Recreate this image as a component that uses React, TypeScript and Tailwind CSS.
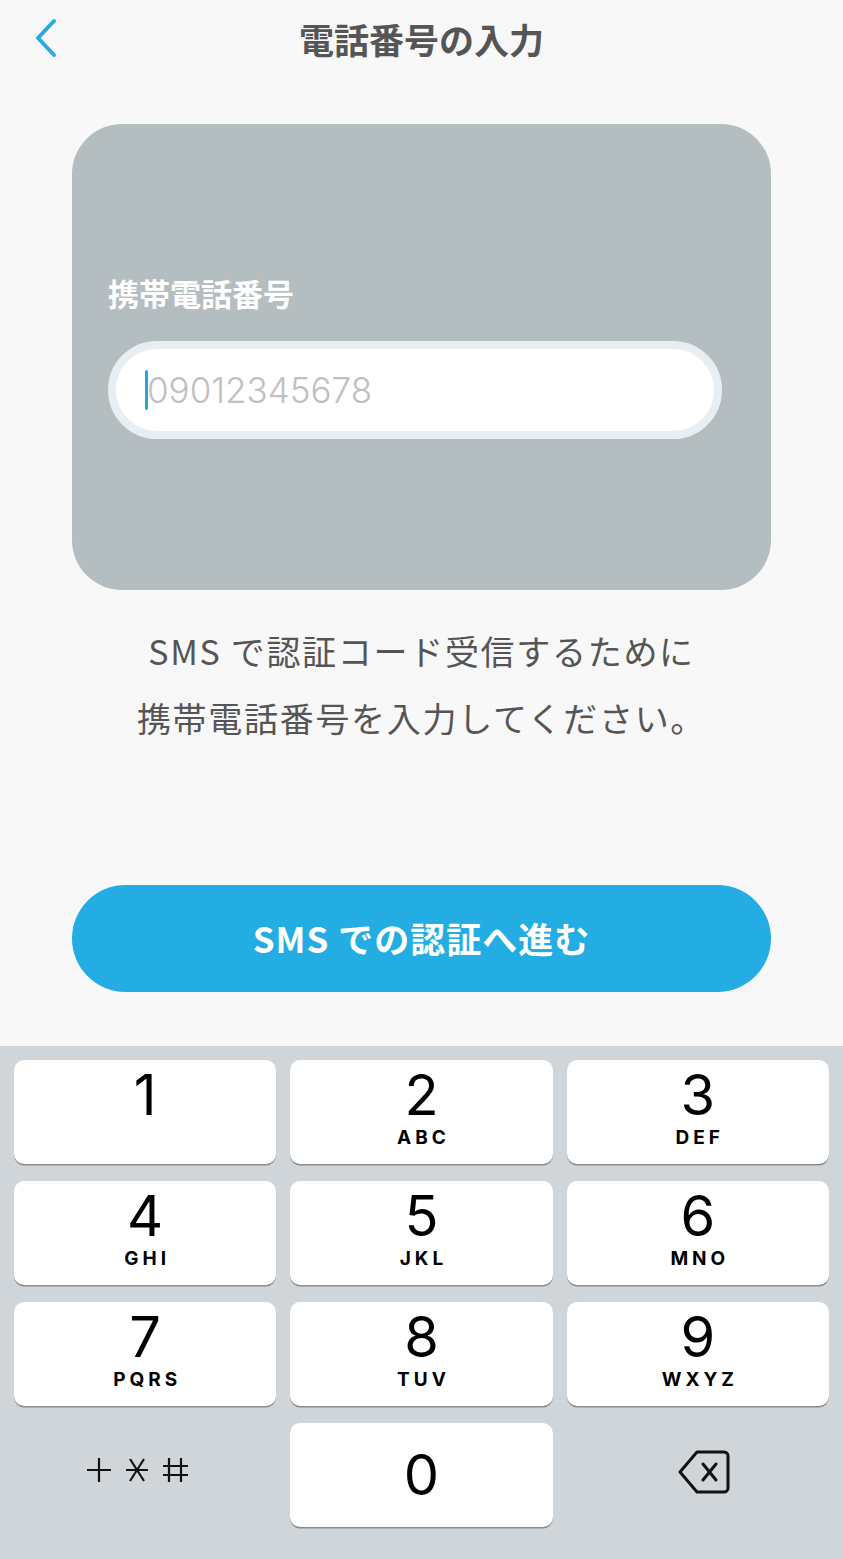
import React from 'react';

const keys = [
  { d: '1', l: '' },
  { d: '2', l: 'ABC' },
  { d: '3', l: 'DEF' },
  { d: '4', l: 'GHI' },
  { d: '5', l: 'JKL' },
  { d: '6', l: 'MNO' },
  { d: '7', l: 'PQRS' },
  { d: '8', l: 'TUV' },
  { d: '9', l: 'WXYZ' },
];

const jp = { fontFamily: '"Noto Sans CJK JP", "Noto Sans", sans-serif' };
const kb = { fontFamily: 'Inter, "Liberation Sans", sans-serif' };

const Key: React.FC<{ d: string; l: string; center?: boolean }> = ({ d, l, center }) => (
  <button
    className={`h-[104px] bg-white rounded-[10px] shadow-[0_1.5px_0_#8a8c90] flex flex-col items-center ${center ? 'justify-center' : 'pt-[5px]'}`}
    style={kb}
  >
    <span className="text-[56px] leading-[60px] font-normal text-black">{d}</span>
    {l && <span className="mt-[2px] text-[19px] leading-[22px] font-bold tracking-[4px] pl-[4px] text-black">{l}</span>}
  </button>
);

const App: React.FC = () => {
  return (
    <div className="w-[843px] h-[1559px] bg-[#f8f8f8] flex flex-col overflow-hidden" style={jp}>
      {/* header */}
      <div className="h-[78px] relative flex items-center justify-center">
        <button className="absolute left-[30px] top-[18px]">
          <svg width="30" height="40" viewBox="0 0 30 40" fill="none">
            <path d="M24 3 L8 20 L24 37" stroke="#29a9df" strokeWidth="4" strokeLinecap="round" strokeLinejoin="round" />
          </svg>
        </button>
        <h1 className="text-[35px] font-bold text-[#555555] leading-none -mt-[2px]">電話番号の入力</h1>
      </div>

      {/* card */}
      <div className="mx-[72px] mt-[46px] h-[466px] rounded-[50px] bg-[#b4bdbf] pl-[36px] pr-[49px] pt-[151px]">
        <div className="text-[31px] leading-[36px] font-bold text-white">携帯電話番号</div>
        <div className="mt-[30px] h-[98px] rounded-full bg-white border-[8px] border-[#e9eef2] flex items-center pl-[29px]">
          <span className="w-[3px] h-[40px] bg-[#26a6dd] rounded-full" />
          <span className="text-[35px] text-[#c0c0c0] -ml-[1px]" style={{ fontFamily: 'Inter, "Liberation Sans", sans-serif', fontWeight: 300 }}>09012345678</span>
        </div>
      </div>

      {/* description */}
      <div className="mt-[27px] text-center text-[34px] leading-[67px] text-[#555555] tracking-[1.7px]">
        <p>SMS で認証コード受信するために</p>
        <p>携帯電話番号を入力してください。</p>
      </div>

      {/* submit */}
      <button className="mx-[72px] mt-[134px] h-[107px] rounded-full bg-[#23ade2] text-white text-[35px] font-bold tracking-[1px]">
        SMS での認証へ進む
      </button>

      {/* keypad */}
      <div className="mt-[54px] flex-1 bg-[#d0d5da] px-[14px] pt-[14px]">
        <div className="grid grid-cols-3 gap-x-[14px] gap-y-[17px]">
          {keys.map(k => (
            <Key key={k.d} d={k.d} l={k.l} />
          ))}
          <div className="h-[104px] flex items-center justify-center pr-[8px] pb-[10px]">
            <svg width="112" height="34" viewBox="0 0 112 34" fill="none" stroke="#111" strokeWidth="2.2" strokeLinecap="butt">
              <path d="M2 17 H26 M14 5 V29" />
              <path d="M41 17 H63 M45 6 L59 28 M59 6 L45 28" />
              <path d="M84 5 V29 M96 5 V29 M78 13 H103 M78 22 H103" />
            </svg>
          </div>
          <Key d="0" l="" center />
          <div className="h-[104px] flex items-center justify-center pl-[12px] pb-[6px]">
            <svg width="54" height="46" viewBox="0 0 54 46" fill="none" stroke="#111" strokeWidth="3" strokeLinejoin="round" strokeLinecap="round">
              <path d="M20 3 H47 a4 4 0 0 1 4 4 V39 a4 4 0 0 1 -4 4 H20 L3 23 Z" />
              <path d="M26 15 L39 31 M39 15 L26 31" />
            </svg>
          </div>
        </div>
      </div>
    </div>
  );
};

export default App;
